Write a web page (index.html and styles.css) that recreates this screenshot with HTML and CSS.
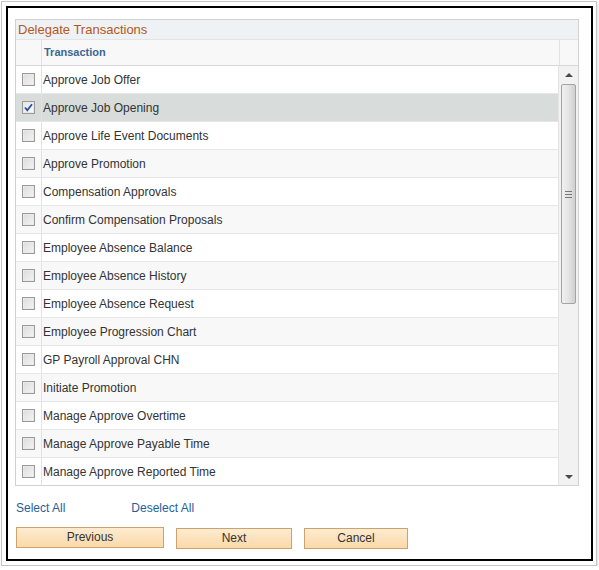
FILE: index.html
```html
<!DOCTYPE html>
<html>
<head>
<meta charset="utf-8">
<link rel="stylesheet" href="styles.css">
</head>
<body>
<div class="frame">
  <div class="dialog">
    <div class="grid">
      <div class="grid-title">Delegate Transactions</div>
      <div class="grid-head">
        <div class="cell-check"></div>
        <div class="cell-name head-label">Transaction</div>
        <div class="cell-scroll"></div>
      </div>
      <div class="grid-body">
        <div class="rows">
          <div class="row"><div class="cell-check"><span class="cb"></span></div><div class="cell-name">Approve Job Offer</div></div>
          <div class="row selected"><div class="cell-check"><span class="cb checked"><svg viewBox="0 0 11 11" width="11" height="11"><path d="M2 5.5 L4.3 8.3 L9 2.2" fill="none" stroke="#2b4ea3" stroke-width="1.8"/></svg></span></div><div class="cell-name">Approve Job Opening</div></div>
          <div class="row"><div class="cell-check"><span class="cb"></span></div><div class="cell-name">Approve Life Event Documents</div></div>
          <div class="row alt"><div class="cell-check"><span class="cb"></span></div><div class="cell-name">Approve Promotion</div></div>
          <div class="row"><div class="cell-check"><span class="cb"></span></div><div class="cell-name">Compensation Approvals</div></div>
          <div class="row alt"><div class="cell-check"><span class="cb"></span></div><div class="cell-name">Confirm Compensation Proposals</div></div>
          <div class="row"><div class="cell-check"><span class="cb"></span></div><div class="cell-name">Employee Absence Balance</div></div>
          <div class="row alt"><div class="cell-check"><span class="cb"></span></div><div class="cell-name">Employee Absence History</div></div>
          <div class="row"><div class="cell-check"><span class="cb"></span></div><div class="cell-name">Employee Absence Request</div></div>
          <div class="row alt"><div class="cell-check"><span class="cb"></span></div><div class="cell-name">Employee Progression Chart</div></div>
          <div class="row"><div class="cell-check"><span class="cb"></span></div><div class="cell-name">GP Payroll Approval CHN</div></div>
          <div class="row alt"><div class="cell-check"><span class="cb"></span></div><div class="cell-name">Initiate Promotion</div></div>
          <div class="row"><div class="cell-check"><span class="cb"></span></div><div class="cell-name">Manage Approve Overtime</div></div>
          <div class="row alt"><div class="cell-check"><span class="cb"></span></div><div class="cell-name">Manage Approve Payable Time</div></div>
          <div class="row last"><div class="cell-check"><span class="cb"></span></div><div class="cell-name">Manage Approve Reported Time</div></div>
        </div>
        <div class="scrollbar">
          <div class="arrow up"></div>
          <div class="track">
            <div class="thumb"><span class="grip"></span></div>
          </div>
          <div class="arrow down"></div>
        </div>
      </div>
    </div>
    <div class="links">
      <a class="link" href="#">Select All</a>
      <a class="link" href="#">Deselect All</a>
    </div>
    <div class="buttons">
      <button class="btn btn-prev">Previous</button>
      <button class="btn btn-next">Next</button>
      <button class="btn btn-cancel">Cancel</button>
    </div>
  </div>
</div>
</body>
</html>
```
FILE: styles.css
```css
html, body {
  margin: 0;
  padding: 0;
  background: #ffffff;
}
body {
  font-family: "Liberation Sans", Arial, sans-serif;
  font-size: 12px;
  color: #333333;
}
.frame {
  margin: 1px 0 0 1px;
  width: 587px;
  height: 555px;
  border: 1px solid #c4c4c4;
  padding: 4px 3px 4px 4px;
  box-shadow: 1px 1px 2px rgba(0,0,0,0.12);
}
.dialog {
  box-sizing: border-box;
  width: 587px;
  height: 555px;
  border: 2px solid #000000;
  padding: 11px 0 0 7px;
}
.grid {
  width: 562px;
  border: 1px solid #d2d2d2;
}
.grid-title {
  height: 19px;
  line-height: 19px;
  background: #eef2f4;
  color: #b4581c;
  font-size: 13px;
  padding-left: 2px;
}
.grid-head {
  display: flex;
  height: 25px;
  background: #f8f8f8;
  border-top: 1px solid #e2e4e6;
  border-bottom: 1px solid #d8d8d8;
}
.cell-check {
  width: 25px;
  flex: none;
  border-right: 1px solid #e2e2e2;
  display: flex;
  align-items: center;
  justify-content: center;
}
.cell-name {
  flex: 1;
  padding-left: 1px;
  display: flex;
  align-items: center;
  white-space: nowrap;
}
.head-label {
  color: #3c6690;
  font-weight: bold;
  font-size: 11px;
  padding-left: 2px;
  padding-bottom: 2px;
}
.cell-scroll {
  width: 18px;
  flex: none;
  border-left: 1px solid #e2e2e2;
}
.grid-body {
  display: flex;
  height: 419px;
}
.rows {
  flex: 1;
}
.row {
  display: flex;
  height: 27px;
  border-bottom: 1px solid #e6e6e6;
  background: #ffffff;
}
.row.alt {
  background: #f8f8f8;
}
.row.selected {
  background: #d8dddb;
}
.row.last {
  height: 27px;
  border-bottom: none;
}
.cb {
  box-sizing: border-box;
  width: 13px;
  height: 13px;
  border: 1px solid #9a9a9a;
  background: linear-gradient(135deg, #dcdcdc 0%, #f4f4f4 100%);
  box-shadow: inset 0 0 0 1px #e8e8e8;
  display: flex;
  align-items: center;
  justify-content: center;
}
.cb.checked {
  background: linear-gradient(135deg, #e4e4e4 0%, #fafafa 100%);
}
.scrollbar {
  width: 19px;
  flex: none;
  background: #f2f2f2;
  border-left: 1px solid #e4e4e4;
  display: flex;
  flex-direction: column;
  align-items: center;
}
.arrow {
  width: 0;
  height: 0;
  border-left: 4px solid transparent;
  border-right: 4px solid transparent;
  flex: none;
}
.arrow.up {
  border-bottom: 4px solid #4a4a4a;
  margin-top: 7px;
  margin-bottom: 7px;
}
.arrow.down {
  border-top: 4px solid #4a4a4a;
  margin-bottom: 6px;
}
.track {
  flex: 1;
  width: 100%;
  display: flex;
  justify-content: center;
}
.thumb {
  box-sizing: border-box;
  width: 15px;
  height: 220px;
  border: 1px solid #a4a4a4;
  border-radius: 2px;
  background: linear-gradient(90deg, #f0f0f0 0%, #e6e6e6 45%, #cfcfcf 100%);
  display: flex;
  align-items: center;
  justify-content: center;
}
.grip {
  width: 7px;
  height: 5px;
  border-top: 1px solid #777;
  border-bottom: 1px solid #777;
  background: linear-gradient(#ffffff00 0 2px, #777 2px 3px, #ffffff00 3px);
}
.links {
  display: flex;
  gap: 66px;
  margin-top: 15px;
  padding-left: 1px;
  height: 16px;
}
.link {
  color: #27609a;
  text-decoration: none;
  font-size: 12px;
}
.buttons {
  display: flex;
  align-items: flex-start;
  gap: 12px;
  margin-top: 10px;
  padding-left: 1px;
}
.btn {
  box-sizing: border-box;
  height: 21px;
  border: 1px solid #caa36e;
  background: linear-gradient(#fdebd0, #fbd9a8);
  font-family: "Liberation Sans", Arial, sans-serif;
  font-size: 12px;
  color: #333333;
  padding: 0 0 1px 0;
}
.btn-prev { width: 148px; }
.btn-next { width: 116px; margin-top: 1px; }
.btn-cancel { width: 104px; margin-top: 1px; }
```
